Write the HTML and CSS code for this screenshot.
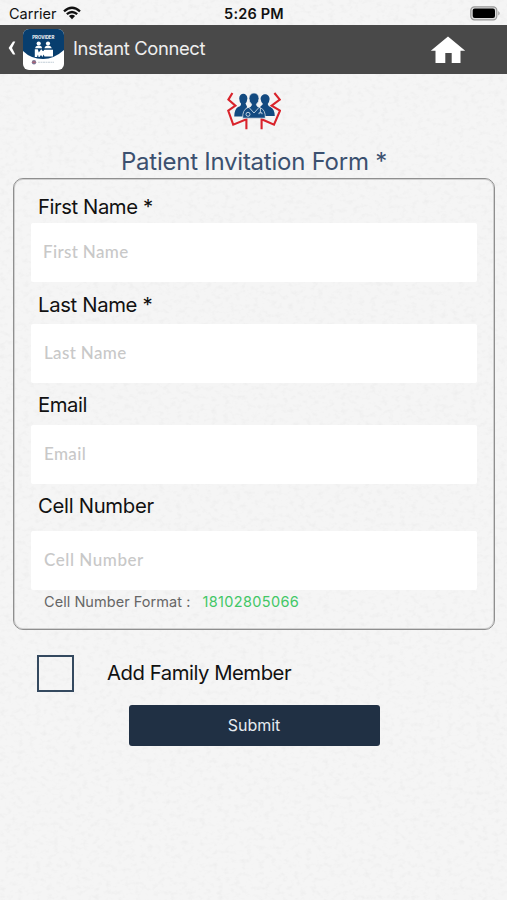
FILE: index.html
```html
<!DOCTYPE html>
<html lang="en">
<head>
<meta charset="utf-8">
<title>Patient Invitation Form</title>
<link rel="stylesheet" href="styles.css">
</head>
<body>
<svg class="paper" aria-hidden="true">
  <filter id="grain" x="0" y="0" width="100%" height="100%">
    <feTurbulence type="fractalNoise" baseFrequency="0.17 0.22" numOctaves="3" seed="8"/>
    <feColorMatrix type="matrix" values="0 0 0 0 0.5  0 0 0 0 0.5  0 0 0 0 0.5  0.28 0 0 0 -0.135"/>
  </filter>
  <rect width="100%" height="100%" filter="url(#grain)"/>
</svg>
<div class="screen">
  <div class="status">
    <div class="carrier"><span class="carrier-name">Carrier</span>
      <svg class="wifi" viewBox="0 0 18 14"><path d="M1 5.3Q9-1.8 17 5.3M3.8 8.2Q9 3.7 14.2 8.2" fill="none" stroke="#111" stroke-width="2.3"/><path d="M5.9 10Q9 7.3 12.1 10L9 13.2Z" fill="#111"/></svg>
    </div>
    <div class="time">5:26 PM</div>
    <svg class="battery" viewBox="0 0 31 15"><rect x=".8" y=".8" width="26" height="13" rx="3.6" fill="#ddd" stroke="#999" stroke-width="1.2"/><rect x="2.7" y="2.6" width="22.3" height="9.5" rx="2" fill="#000"/><path d="M28.3 5Q31 7.3 28.3 9.6Z" fill="#999"/></svg>
  </div>
  <header class="nav">
    <svg class="back" viewBox="0 0 8 14"><path d="M7.3.5H5L.6 7 5 13.5h2.3L4 7Z" fill="#fff"/></svg>
    <svg class="app-icon" viewBox="0 0 41 41">
      <defs><clipPath id="tile"><rect width="41" height="41" rx="6"/></clipPath></defs>
      <g clip-path="url(#tile)">
        <rect width="41" height="41" fill="#fff"/>
        <path d="M0 0H41V21Q31 30 20 30Q8 30 0 22Z" fill="#083e6e"/>
        <g fill="#fff"><circle cx="15.7" cy="14.5" r="2.1"/><path d="M12.2 19.3Q12.5 16.5 15.7 16.5T19 19.3Z"/><circle cx="25" cy="14.5" r="2.1"/><path d="M21.5 19.3Q22 16.5 25 16.5T28.7 19.3Z"/><path d="M11.8 20.2h3l1 3.3 2.4-3.3 1.8 2 1.5-1.5H30V27.5h-8.5l-1-2-1 2.5-1.5-2-1.5 2h-1l-.5-2.5-1 2.5h-2.2Z"/></g>
        <circle cx="11" cy="33.2" r="2.2" fill="#7f7795"/><path d="M9.5 33.2h3" stroke="#c35764"/>
        <path d="M15 33.2h16" stroke="#c4ced8" stroke-width="1.1" stroke-dasharray="2 .5"/>
      </g>
      <text x="20.3" y="9.8" text-anchor="middle" textLength="22" lengthAdjust="spacingAndGlyphs" class="icon-label">PROVIDER</text>
    </svg>
    <h1>Instant Connect</h1>
    <svg class="home" viewBox="0 0 36 28"><path d="M18 .5 35.2 14.8H30.5V27H21.7V17H15.3V27H5.5V14.8H.8Z" fill="#fff"/></svg>
  </header>
  <main>
    <svg class="logo" viewBox="0 0 54 38">
      <g fill="none" stroke="#d9232b" stroke-width="2.1"><path d="M5.4 1 1.4 7.6 8.4 13.6 1.2 18.6 6.2 32.6 19.4 27.2V37.2"/><path d="M47.4 1 52.8 7.6 44.6 13.6 53 18.6 47 32.6 34.6 27.2V37.2"/></g>
      <g fill="#134a80"><path d="M12.2 6.5C12.2 0 20.4 0 20.4 6.5Q20 10 18.5 11.5L20 14.5 18.4 24.4H7.2Q7.6 16.6 11 15Q14.3 14 14 11.5Q12.4 10 12.2 6.5Z"/><path d="M33.6 7C33.6.5 42.6.5 42.6 7Q42.3 10.5 40.7 12Q41 14.3 43.8 15.3Q47.5 17 47.8 24H35L33 15 36 12Q34 10.5 33.6 7Z"/></g>
      <path d="M15.6 26.2Q15.6 18 20 16Q24.8 15 24.6 12.3Q22 10 22 6.5C22-.8 32 -.8 32 6.5Q32 10 29.4 12.3Q29.4 15 33.8 16Q38.4 18 38.4 26.2Z" fill="#134a80" stroke="#f4f4f4" stroke-width=".7"/>
      <g fill="none" stroke="#e5edf4" stroke-width=".8"><path d="M22.2 15.7 27 21 31.8 15.7M33.4 16V20.6M32 22.2v-1.4h3v1.4"/><circle cx="21" cy="22.3" r="2"/></g>
    </svg>
    <h2>Patient Invitation Form *</h2>
    <form class="card">
      <label for="first">First Name *</label>
      <input id="first" placeholder="First Name">
      <label for="last">Last Name *</label>
      <input id="last" class="indent" placeholder="Last Name">
      <label for="email">Email</label>
      <input id="email" class="indent" placeholder="Email">
      <label for="cell" class="cell-label">Cell Number</label>
      <input id="cell" class="indent cell" placeholder="Cell Number">
      <p class="hint"><span>Cell Number Format :</span><span class="sample">18102805066</span></p>
    </form>
    <div class="family"><span class="box"></span><span class="family-text">Add Family Member</span></div>
    <button class="submit" type="button">Submit</button>
  </main>
</div>
</body>
</html>
```

FILE: styles.css
```css
* { box-sizing: border-box; }
body { margin: 0; background: #f5f5f5; font-family: Inter, "Liberation Sans", sans-serif; color: #111; }
.paper { position: absolute; inset: 0; width: 100%; height: 900px; z-index: -1; }
.screen { width: 507px; height: 900px; overflow: hidden; }
svg { display: block; flex: none; }

.status { height: 25px; display: grid; grid-template-columns: 1fr auto 1fr; align-items: center; padding: 2px 6px 0 9px; }
.carrier { display: flex; align-items: center; gap: 6px; font-size: 14.5px; line-height: 20px; }
.wifi { width: 18px; height: 14px; margin-top: -2px; }
.time { font-size: 14.5px; font-weight: 600; line-height: 20px; letter-spacing: .2px; margin-right: 2px; }
.battery { width: 31px; height: 15px; justify-self: end; }

.nav { height: 49px; display: flex; align-items: center; background: #494949; padding: 0 41px 0 8px; }
.back { width: 8px; height: 14px; margin-top: -3px; }
.app-icon { width: 41px; height: 41px; margin-left: 7px; }
.icon-label { font: 700 4.4px Inter, sans-serif; fill: #fff; }
.nav h1 { margin: 0 auto 3px 9px; font-size: 18.4px; font-weight: 400; line-height: 24px; letter-spacing: -.35px; color: #eee; }
.home { width: 36px; height: 28px; }

main { display: flex; flex-direction: column; align-items: center; padding: 18px 12px 0 13px; }
.logo { width: 54px; height: 38px; }
h2 { margin: 16px 0 1px; font-size: 24px; font-weight: 400; line-height: 31px; letter-spacing: -.24px; color: #3b506f; white-space: nowrap; }
.card { width: 482px; height: 452px; border: 1px solid #8f8f8f; box-shadow: inset 0 0 0 1px #d0d0d0; border-radius: 10px; display: flex; flex-direction: column; padding: 0 17px; }
label { height: 42px; padding: 1px 0 0 7px; font-size: 20.3px; line-height: 44px; letter-spacing: -.42px; white-space: nowrap; }
label:first-child { height: 44px; line-height: 54px; }
.cell-label { height: 47px; line-height: 42px; letter-spacing: -.3px; }
label[for="email"] { line-height: 42px; }
label[for="last"] { letter-spacing: -.34px; }
input { height: 59px; flex: none; border: 0; border-radius: 2px; background: #fff; padding: 0 12px 2px; font: 500 17px Lato, sans-serif; letter-spacing: .35px; outline: 0; }
input.indent { padding-left: 13px; }
input.cell { letter-spacing: .55px; }
input::placeholder { color: #c8c8c8; opacity: 1; }
.hint { margin: 0; padding-left: 13px; display: flex; gap: 12px; font-size: 14.5px; line-height: 24px; letter-spacing: .05px; color: #666; }
.sample { color: #42c766; letter-spacing: .35px; }
.family { align-self: stretch; display: flex; align-items: center; height: 37px; margin: 25px 0 0 24px; gap: 33px; }
.box { width: 37px; height: 37px; border: 2px solid #34495f; }
.family-text { font-size: 20.3px; line-height: 28px; letter-spacing: -.46px; margin-top: -2px; }
.submit { width: 251px; height: 41px; margin-top: 13px; border: 0; border-radius: 3px; background: #203044; color: #e6ebf0; font: 400 16px Inter, sans-serif; padding: 0 0 2px; }
```
